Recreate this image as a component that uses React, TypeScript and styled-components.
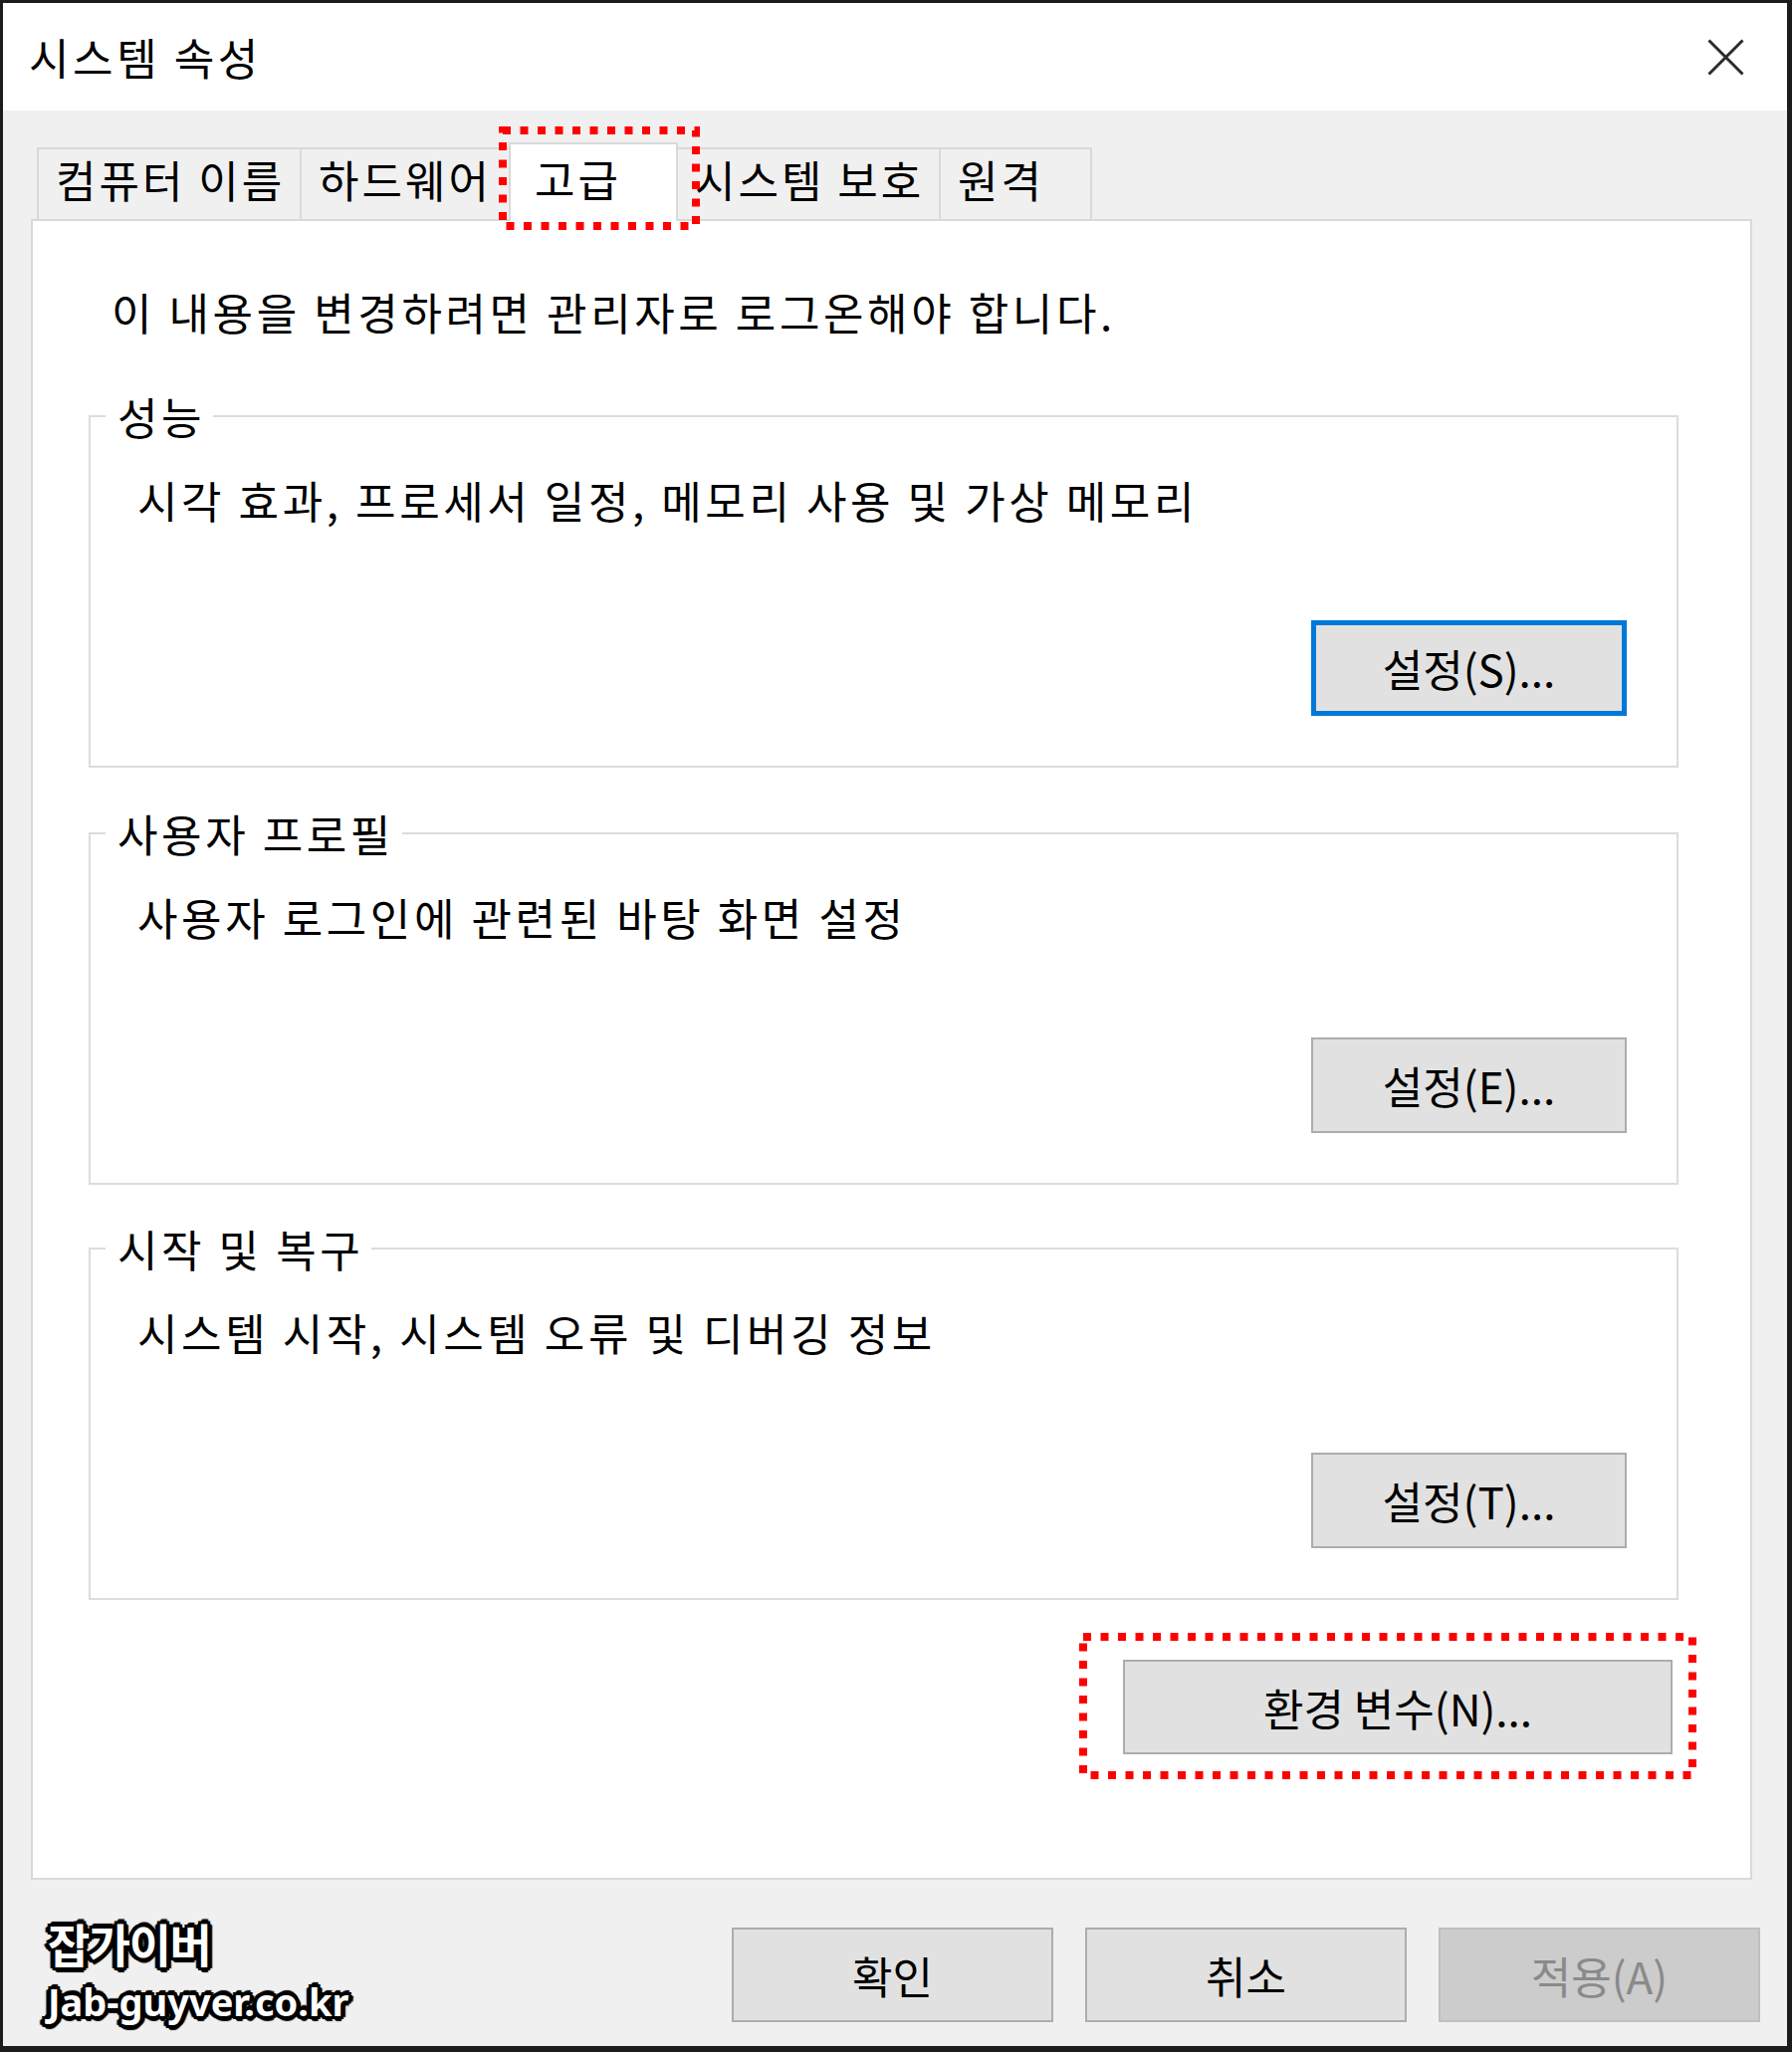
import styled, {createGlobalStyle} from "styled-components"

interface TabModel {
  label: string;
  width: number;
  active?: boolean;
}

interface SectionModel {
  title: string;
  description: string;
  button: string;
  focused?: boolean;
  gap: number;
}

const tabs: TabModel[] = [
  {label: "컴퓨터 이름", width: 266},
  {label: "하드웨어", width: 212},
  {label: "고급", width: 170, active: true},
  {label: "시스템 보호", width: 266},
  {label: "원격", width: 154},
]

const sections: SectionModel[] = [
  {title: "성능", description: "시각 효과, 프로세서 일정, 메모리 사용 및 가상 메모리", button: "설정(S)...", focused: true, gap: 0},
  {title: "사용자 프로필", description: "사용자 로그인에 관련된 바탕 화면 설정", button: "설정(E)...", gap: 40},
  {title: "시작 및 복구", description: "시스템 시작, 시스템 오류 및 디버깅 정보", button: "설정(T)...", gap: 38},
]

const DottedFrame = ({width, height}: {width: number; height: number}) => (
  <FrameSvg width={width} height={height} viewBox={`0 0 ${width} ${height}`}>
    <rect
      x={4}
      y={4}
      width={width - 8}
      height={height - 8}
      fill="none"
      stroke="#ff0000"
      strokeWidth={8}
      strokeDasharray="8 9.5"
    />
  </FrameSvg>
)

const CloseIcon = () => (
  <svg width="37" height="37" viewBox="0 0 37 37">
    <path d="M1.5 1.5 L35.5 35.5 M35.5 1.5 L1.5 35.5" stroke="#2b2b2b" strokeWidth="3" fill="none" />
  </svg>
)

export default function App() {
  return (
    <>
      <GlobalStyle />
      <Window>
        <TitleBar>
          <Title>시스템 속성</Title>
          <CloseIcon />
        </TitleBar>
        <Body>
          <TabBar>
            {tabs.map((tab) => (
              <Tab key={tab.label} $active={!!tab.active} $width={tab.width}>
                {tab.label}
                {tab.active && (
                  <TabMark>
                    <DottedFrame width={202} height={104} />
                  </TabMark>
                )}
              </Tab>
            ))}
          </TabBar>
          <Panel>
            <Notice>이 내용을 변경하려면 관리자로 로그온해야 합니다.</Notice>
            {sections.map((section) => (
              <Group key={section.title} $gap={section.gap}>
                <GroupTitle>{section.title}</GroupTitle>
                <GroupText>{section.description}</GroupText>
                <GroupButton $variant={section.focused ? "focused" : "normal"}>{section.button}</GroupButton>
              </Group>
            ))}
            <Highlight>
              <DottedFrame width={620} height={147} />
              <Button $variant="normal" $width={552}>환경 변수(N)...</Button>
            </Highlight>
          </Panel>
          <Footer>
            <Watermark>
              <span>잡가이버</span>
              <small>Jab-guyver.co.kr</small>
            </Watermark>
            <Button $variant="normal" $width={323}>확인</Button>
            <Button $variant="normal" $width={323}>취소</Button>
            <Button $variant="disabled" $width={323}>적용(A)</Button>
          </Footer>
        </Body>
      </Window>
    </>
  )
}

const GlobalStyle = createGlobalStyle`
    html, body {
        margin: 0;
        padding: 0;
        background: #f0f0f0;
    }

    body {
        font-family: "Noto Sans CJK KR", "Noto Sans", sans-serif;
        color: #000;
    }

    * {
        box-sizing: border-box;
    }
`

const Window = styled.div`
    width: 1800px;
    height: 2061px;
    display: flex;
    flex-direction: column;
    border-style: solid;
    border-color: #1c1c1c;
    border-width: 3px 5px 6px 3px;
    background: #f0f0f0;
    overflow: hidden;
`

const TitleBar = styled.div`
    height: 108px;
    flex-shrink: 0;
    display: flex;
    align-items: center;
    justify-content: space-between;
    padding: 0 43px 0 26px;
    background: #ffffff;
`

const Title = styled.div`
    font-size: 44px;
    line-height: 52px;
    letter-spacing: 3.6px;
`

const Body = styled.div`
    flex: 1;
    display: flex;
    flex-direction: column;
    padding: 32px 35px 24px 28px;
`

const TabBar = styled.div`
    display: flex;
    align-items: flex-end;
    margin-left: 6px;
`

const Tab = styled.div<{$active: boolean; $width: number}>`
    position: relative;
    width: ${({$width}) => $width}px;
    height: ${({$active}) => ($active ? 79 : 72)}px;
    margin-bottom: ${({$active}) => ($active ? -2 : 0)}px;
    padding: ${({$active}) => ($active ? "8px 0 0 24px" : "4px 0 0 17px")};
    border: 2px solid #d9d9d9;
    border-bottom: none;
    background: ${({$active}) => ($active ? "#ffffff" : "#f0f0f0")};
    z-index: ${({$active}) => ($active ? 2 : 0)};
    font-size: 44px;
    line-height: 52px;
    letter-spacing: 3px;
    white-space: nowrap;

    & + & {
        margin-left: -2px;
    }
`

const TabMark = styled.div`
    position: absolute;
    left: -12px;
    top: -18px;
    z-index: 3;
`

const FrameSvg = styled.svg`
    display: block;
`

const Panel = styled.div`
    flex: 1;
    display: flex;
    flex-direction: column;
    padding: 65px 72px 0 56px;
    border: 2px solid #d9d9d9;
    background: #ffffff;
    position: relative;
    z-index: 1;
`

const Notice = styled.div`
    margin: 0 0 53px 23px;
    font-size: 44px;
    line-height: 52px;
    letter-spacing: 3.6px;
`

const Group = styled.fieldset<{$gap: number}>`
    display: flex;
    flex-direction: column;
    margin: ${({$gap}) => $gap}px 0 0 0;
    padding: 0 50px 50px 15px;
    border: 2px solid #dcdcdc;
    min-width: 0;
`

const GroupTitle = styled.legend`
    padding: 0 8px 0 12px;
    font-size: 44px;
    line-height: 52px;
    letter-spacing: 3.6px;
`

const GroupText = styled.div`
    margin: 32px 0 0 32px;
    font-size: 44px;
    line-height: 52px;
    letter-spacing: 3.6px;
`

const Button = styled.button<{$variant: "normal" | "focused" | "disabled"; $width?: number}>`
    width: ${({$width}) => $width ?? 317}px;
    height: 95px;
    display: flex;
    align-items: center;
    justify-content: center;
    padding: 0;
    font-family: "Noto Sans CJK KR", "Noto Sans", sans-serif;
    font-size: 44px;
    line-height: 1;
    background: ${({$variant}) => ($variant === "disabled" ? "#cccccc" : "#e1e1e1")};
    color: ${({$variant}) => ($variant === "disabled" ? "#8a8a8a" : "#000000")};
    border: ${({$variant}) =>
      $variant === "focused" ? "5px solid #0078d7" : $variant === "disabled" ? "2px solid #bfbfbf" : "2px solid #adadad"};
`

const GroupButton = styled(Button)`
    align-self: flex-end;
    height: 96px;
    margin-top: 95px;
`

const Highlight = styled.div`
    position: relative;
    align-self: flex-end;
    margin: 33px -18px 0 0;
    padding: 27px 24px 25px 44px;

    ${FrameSvg} {
        position: absolute;
        left: 0;
        top: 0;
    }
`

const Footer = styled.div`
    display: flex;
    align-items: center;
    gap: 32px;
    height: 95px;
    margin: 48px -8px 0 0;
`

const Watermark = styled.div`
    display: flex;
    flex-direction: column;
    margin: -14px auto 0 17px;
    color: #ffffff;
    font-family: "Noto Sans", "Noto Sans CJK KR", sans-serif;
    font-weight: 700;
    text-shadow: 0 0 2px #000, 4px 0 0 #000, -4px 0 0 #000, 0 4px 0 #000, 0 -4px 0 #000,
    3px 3px 0 #000, -3px -3px 0 #000, 3px -3px 0 #000, -3px 3px 0 #000,
    5px 1px 1px #000, -5px 1px 1px #000, 1px 5px 1px #000, 1px -5px 1px #000;

    span {
        font-size: 46px;
        line-height: normal;
        letter-spacing: -1.5px;
    }

    small {
        font-size: 38px;
        line-height: normal;
        letter-spacing: 0;
    }
`
